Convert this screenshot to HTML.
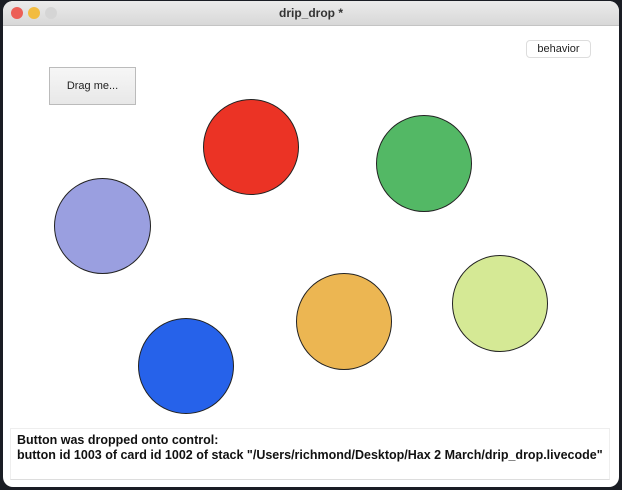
<!DOCTYPE html>
<html><head><style>
body{margin:0;width:622px;height:490px;background:#1a1d24;overflow:hidden;font-family:"Liberation Sans",sans-serif;position:relative}
.win{position:absolute;left:3px;top:1px;width:616px;height:486px;background:#fff;border-radius:10px;overflow:hidden}
.tb{height:24px;background:linear-gradient(#ebebeb,#d8d8d8);border-bottom:1px solid #c4c4c4;text-align:center;font-size:12px;font-weight:bold;line-height:24px;color:#333}
.dot{position:absolute;top:6px;width:12px;height:12px;border-radius:50%}
.c{position:absolute;border-radius:50%;border:1px solid #222;box-sizing:border-box}
.btn{position:absolute;font-size:11px;color:#222;text-align:center;box-sizing:border-box}
.fld{position:absolute;left:7px;top:427px;width:600px;height:52px;border:1px solid #eee;border-bottom:1px solid #ddd;font-size:12.5px;font-weight:bold;color:#111;padding:4px 0 0 6px;line-height:15px;box-sizing:border-box;white-space:nowrap}
</style></head><body>
<div class="win">
<div class="tb">drip_drop *</div>
<div class="dot" style="left:8px;background:#ec5f57"></div>
<div class="dot" style="left:25px;background:#f2bc40"></div>
<div class="dot" style="left:42px;background:#d5d5d5"></div>
<div class="btn" style="left:523px;top:39px;width:65px;height:18px;border:1px solid #ddd;border-radius:4px;line-height:16px">behavior</div>
<div class="btn" style="left:46px;top:66px;width:87px;height:38px;border:1px solid #bbb;background:linear-gradient(#f6f6f6,#e8e8e8);line-height:36px">Drag me...</div>
<div class="c" style="left:200px;top:98px;width:96px;height:96px;background:#eb3325"></div>
<div class="c" style="left:373px;top:114px;width:96px;height:97px;background:#53b865"></div>
<div class="c" style="left:51px;top:177px;width:97px;height:96px;background:#9a9fe0"></div>
<div class="c" style="left:293px;top:272px;width:96px;height:97px;background:#ecb652"></div>
<div class="c" style="left:449px;top:254px;width:96px;height:97px;background:#d5e995"></div>
<div class="c" style="left:135px;top:317px;width:96px;height:96px;background:#2662ea"></div>
<div class="fld">Button was dropped onto control:<br>button id 1003 of card id 1002 of stack "/Users/richmond/Desktop/Hax 2 March/drip_drop.livecode"</div>
</div>
</body></html>
